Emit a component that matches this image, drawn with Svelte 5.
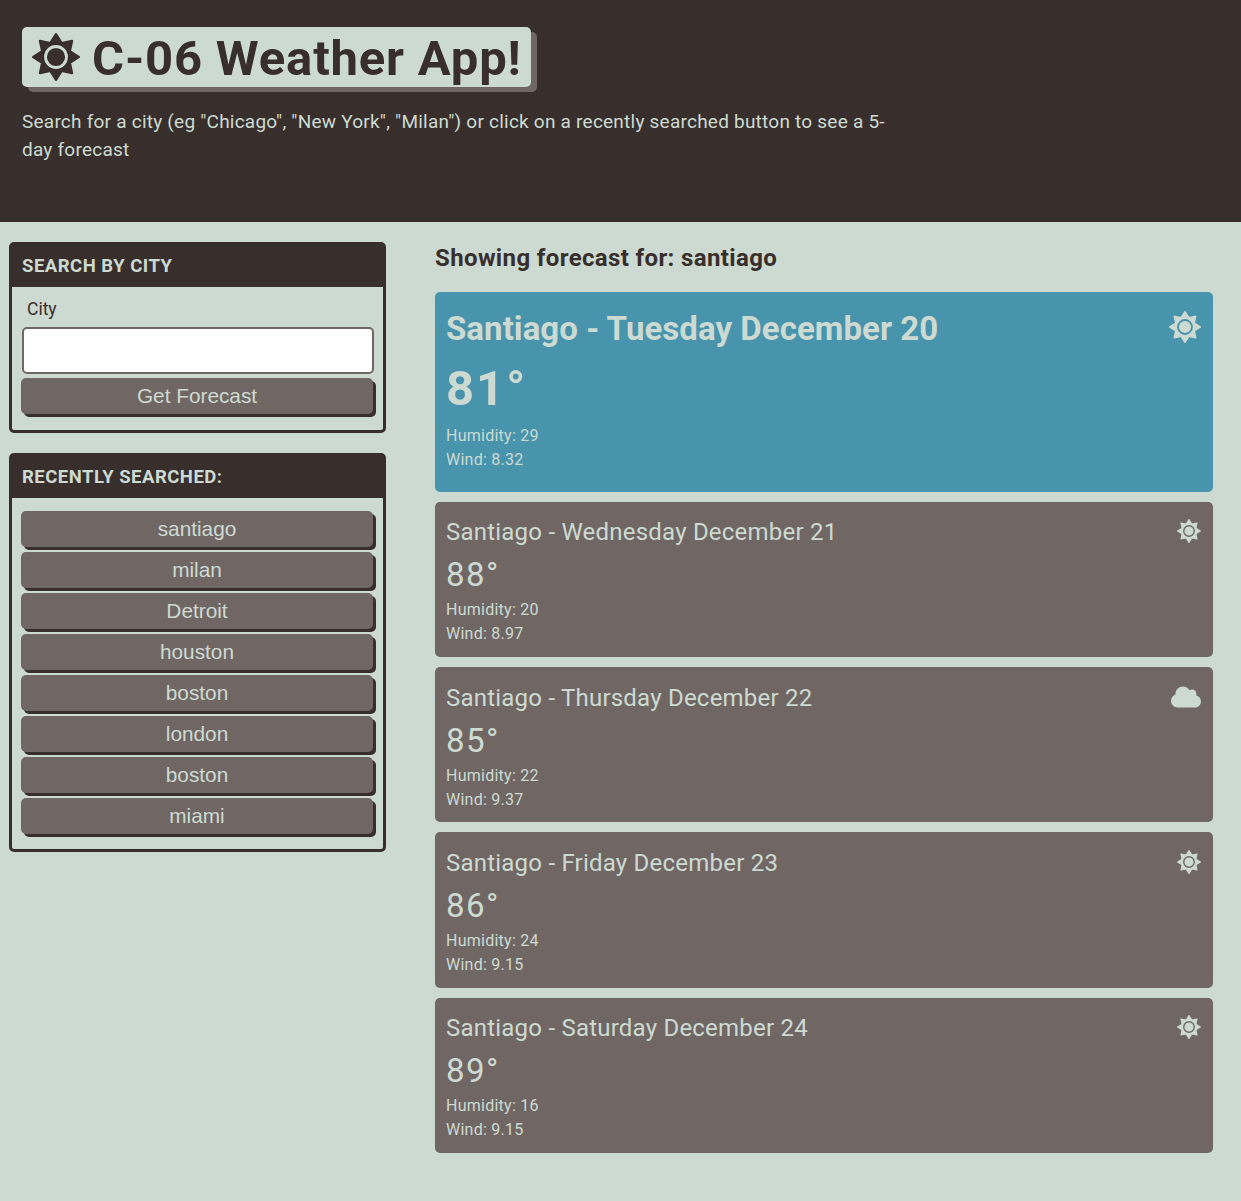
<script>
  const recent = ['santiago', 'milan', 'Detroit', 'houston', 'boston', 'london', 'boston', 'miami'];
  const days = [
    { date: 'Tuesday December 20', temp: 81, humidity: 29, wind: '8.32', icon: 'sun' },
    { date: 'Wednesday December 21', temp: 88, humidity: 20, wind: '8.97', icon: 'sun' },
    { date: 'Thursday December 22', temp: 85, humidity: 22, wind: '9.37', icon: 'cloud' },
    { date: 'Friday December 23', temp: 86, humidity: 24, wind: '9.15', icon: 'sun' },
    { date: 'Saturday December 24', temp: 89, humidity: 16, wind: '9.15', icon: 'sun' }
  ];

  // Eight-pointed star: tips on the axes and diagonals, shallow notches between.
  const points = Array.from({ length: 16 }, (_, i) => {
    const angle = (i * Math.PI) / 8;
    const r = i % 2 ? 160 : i % 4 ? 242 : 244;
    return `${(256 + r * Math.sin(angle)).toFixed(1)},${(256 - r * Math.cos(angle)).toFixed(1)}`;
  }).join(' ');
</script>

{#snippet sun()}
  <svg class="sun" viewBox="0 0 512 512" aria-hidden="true">
    <mask id="ring">
      <rect width="512" height="512" fill="white" />
      <circle cx="256" cy="256" r="112" fill="none" stroke="black" stroke-width="30" />
    </mask>
    <polygon {points} fill="currentColor" stroke="currentColor" stroke-width="24" stroke-linejoin="round" mask="url(#ring)" />
  </svg>
{/snippet}

<header>
  <h1>{@render sun()}<span>C-06 Weather App!</span></h1>
  <p>Search for a city (eg "Chicago", "New York", "Milan") or click on a recently searched button to see a 5-<br />day forecast</p>
</header>

<main>
  <aside>
    <section class="panel">
      <h2>Search by city</h2>
      <form class="body search" onsubmit={(e) => e.preventDefault()}>
        <label for="city">City</label>
        <input id="city" type="text" />
        <button>Get Forecast</button>
      </form>
    </section>
    <section class="panel">
      <h2>Recently searched:</h2>
      <div class="body list">
        {#each recent as city}<button>{city}</button>{/each}
      </div>
    </section>
  </aside>

  <section class="forecast">
    <h2>Showing forecast for: santiago</h2>
    {#each days as day, i}
      <article class:today={i === 0}>
        <div class="top">
          <h3>Santiago - {day.date}</h3>
          {#if day.icon === 'sun'}
            {@render sun()}
          {:else}
            <svg class="cloud" viewBox="0 0 640 512" aria-hidden="true">
              <path fill="currentColor" d="M0 336c0 79.500 64.500 144 144 144H512c70.700 0 128-57.300 128-128c0-61.900-44-113.600-102.400-125.400c4.100-10.700 6.400-22.400 6.400-34.600c0-53-43-96-96-96c-19.700 0-38.100 6-53.300 16.200C367 64.200 315.300 32 256 32C167.600 32 96 103.600 96 192c0 2.700 .1 5.400 .2 8.100C40.200 219.800 0 273.200 0 336z" />
            </svg>
          {/if}
        </div>
        <div class="temp">{day.temp}°</div>
        <p>Humidity: {day.humidity}</p>
        <p>Wind: {day.wind}</p>
      </article>
    {/each}
  </section>
</main>

<style>
  :global(body) {
    background: #cddad1;
    color: #382f2d;
    font-family: Roboto, "Liberation Sans", sans-serif;
  }
  :global(*) { box-sizing: border-box; }
  h1, h2, h3, p { margin: 0; }
  svg { display: block; flex: none; }

  header {
    height: 222px;
    padding: 27px 22px;
    background: #382f2d;
    color: #cddad1;
  }
  h1 {
    display: flex;
    align-items: center;
    gap: 12px;
    width: 509px;
    height: 60px;
    padding: 0 10px;
    border-radius: 5px;
    background: #cddad1;
    box-shadow: 6px 5px #706765;
    color: #382f2d;
    font-size: 49px;
    line-height: 60px;
    white-space: nowrap;
    letter-spacing: 0.82px;
  }
  h1 .sun { width: 48px; height: 48px; }
  h1 span { padding-top: 3px; }
  header p {
    margin-top: 21px;
    font-size: 19px;
    line-height: 28px;
    letter-spacing: 0.23px;
    white-space: nowrap;
  }

  main { display: flex; gap: 49px; padding: 20px 28px 0 9px; }
  aside { display: flex; flex-direction: column; gap: 20px; width: 377px; }
  .panel { border: 3px solid #382f2d; border-radius: 5px; }
  .panel h2 {
    height: 42px;
    padding-left: 10px;
    background: #382f2d;
    color: #cddad1;
    font-size: 18.5px;
    line-height: 43px;
    letter-spacing: 0.5px;
    text-transform: uppercase;
  }
  .body { display: flex; flex-direction: column; padding: 0 10px 0 9px; }
  .search { height: 143px; }
  label { padding-left: 6px; margin-top: 9px; font-size: 17.5px; line-height: 26px; }
  input {
    height: 47px;
    margin: 5px -1px 4px 1px;
    border: 2px solid #706765;
    border-radius: 5px;
    background: #fff;
  }
  button {
    height: 36px;
    padding: 0;
    border: 0;
    border-radius: 5px;
    background: #706765;
    box-shadow: 3px 3px #382f2d;
    color: #cddad1;
    font: 20.8px/36px "Liberation Sans", Arial, sans-serif;
  }
  .list { gap: 5px; padding-top: 13px; height: 351px; }

  .forecast { flex: 1; }
  .forecast h2 {
    height: 50px;
    font-size: 24px;
    line-height: 33px;
    letter-spacing: 0.37px;
  }
  article {
    height: 155.2px;
    margin-bottom: 10px;
    padding: 12.35px 12px 0 11px;
    border-radius: 5px;
    background: #706765;
    color: #cddad1;
  }
  .top { display: flex; justify-content: space-between; }
  h3 { font-size: 24px; font-weight: 400; line-height: 37px; letter-spacing: 0.22px; }
  .top .sun { width: 24px; height: 24px; margin-top: 5px; }
  .cloud { width: 30px; height: 24px; margin-top: 5.45px; }
  .temp { height: 47px; font-size: 33px; line-height: 47px; letter-spacing: 1.5px; }
  article p { font-size: 16px; line-height: 24px; letter-spacing: 0.25px; }
  .today { height: 200px; padding-top: 12px; background: #4894ad; }
  .today h3 { font-size: 33px; font-weight: 700; line-height: 50px; letter-spacing: 0.05px; }
  .today .sun { width: 32px; height: 32px; margin-top: 7px; }
  .today .temp {
    height: 70px;
    font-size: 49px;
    font-weight: 700;
    line-height: 69px;
    letter-spacing: 2px;
  }
</style>
